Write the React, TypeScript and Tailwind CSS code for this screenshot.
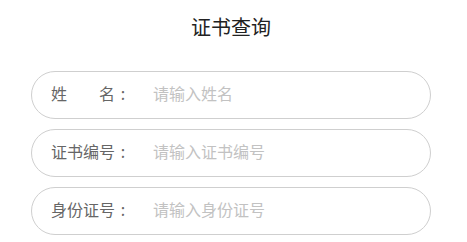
import React from "react";

const rows = [
  { label: "姓\u3000\u3000名", placeholder: "请输入姓名" },
  { label: "证书编号", placeholder: "请输入证书编号" },
  { label: "身份证号", placeholder: "请输入身份证号" },
];

export default function App() {
  return (
    <div
      className="w-[467px] h-[242px] bg-white overflow-hidden"
      style={{ fontFamily: '"Noto Sans CJK SC", "Noto Sans", sans-serif' }}
    >
      <div className="ml-[31px] w-[400px]">
        <h1 className="mt-[17px] h-[22px] text-center text-[20px] leading-[20px] font-normal text-[#222]">
          证书查询
        </h1>
        <div className="mt-[32px] flex flex-col gap-[10px]">
          {rows.map((r) => (
            <div
              key={r.placeholder}
              className="flex h-[48px] items-center rounded-full border border-[#cfcfcf] pb-[4px] pl-[19px]"
            >
              <span className="flex w-[80px] shrink-0 whitespace-nowrap text-[16px] leading-[20px] text-[#666]">
                <span>{r.label}</span>
                <span className="w-[16px] text-center">:</span>
              </span>
              <input
                className="ml-[22px] min-w-0 flex-1 bg-transparent text-[16px] leading-[20px] text-[#333] outline-none placeholder:text-[#c2c2c2]"
                placeholder={r.placeholder}
              />
            </div>
          ))}
        </div>
      </div>
    </div>
  );
}
